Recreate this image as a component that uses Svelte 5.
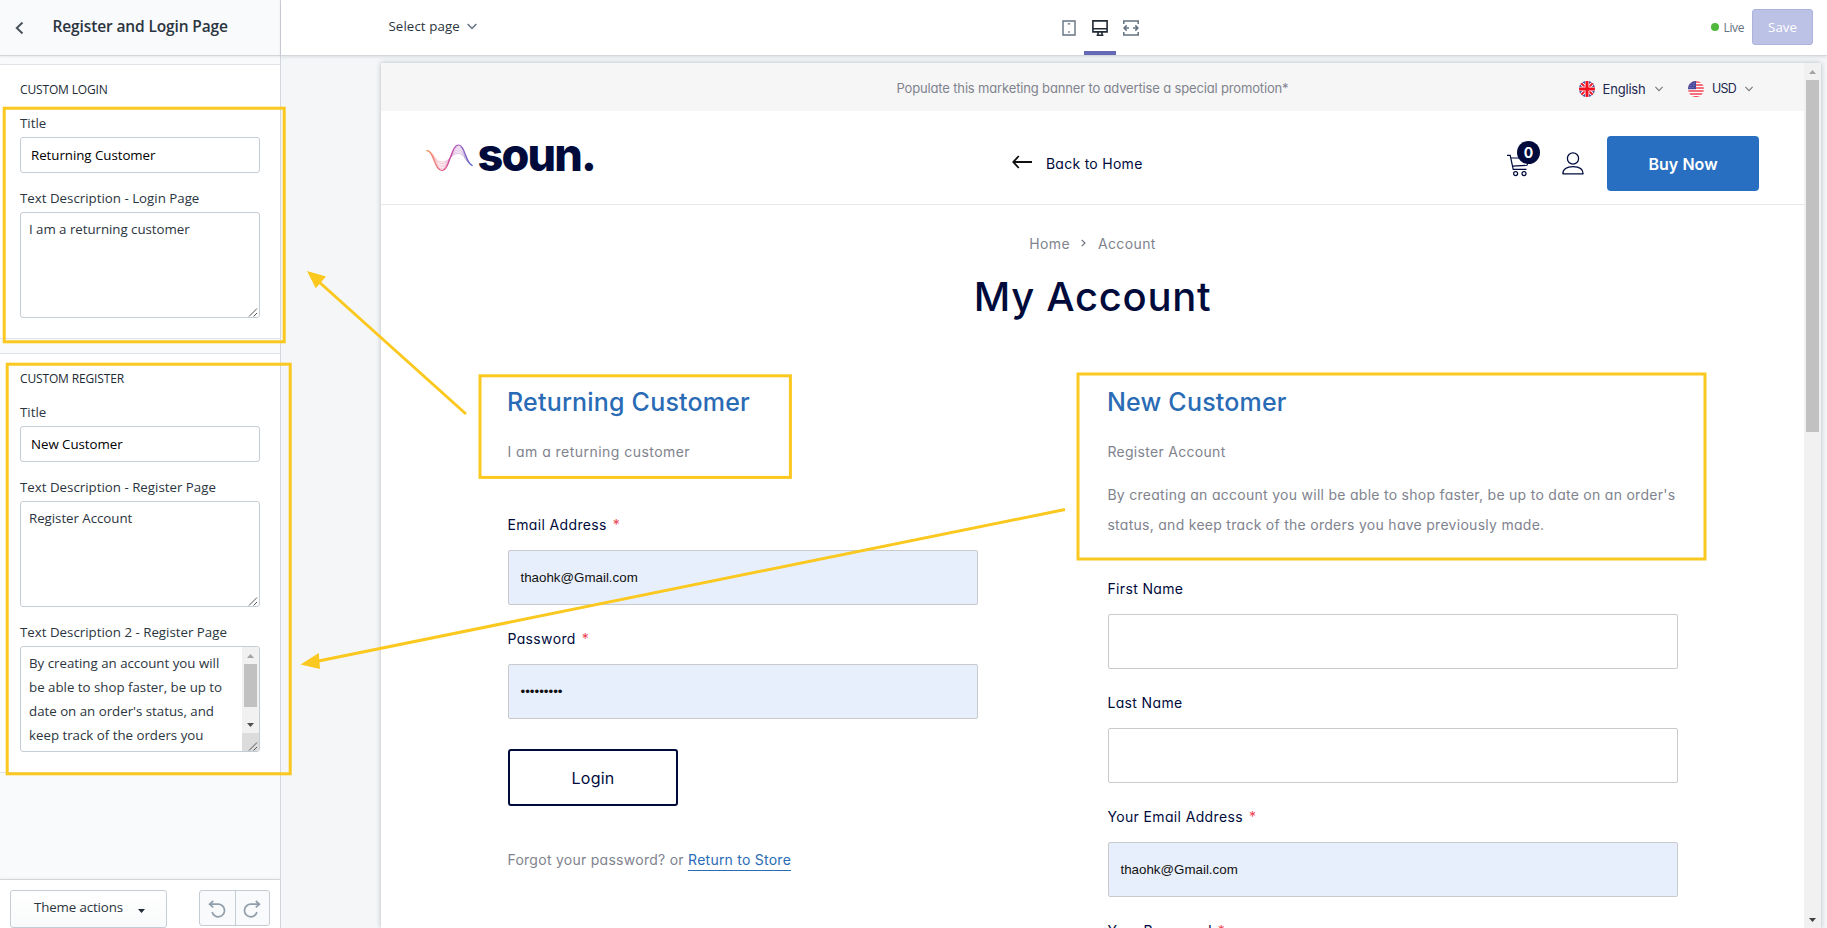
<script>
  const description2 =
    "By creating an account you will be able to shop faster, be up to date on an order's status, and keep track of the orders you";

  // Interpolated strands of the logo wave, outermost to innermost.
  const strands = [0, 1, 2, 3, 4, 5].map((i) => {
    const k = i * 1.7;
    return `M0.5 6.5C8 6.5 8 ${26.5 - k} 16 ${26.5 - k}C24 ${26.5 - k} 24.5 ${1 + k} 32.5 ${1 + k}C39 ${1 + k} 40 20 46.5 21.5`;
  });
</script>

{#snippet grip()}
  <svg class="grip" width="10" height="10" viewBox="0 0 10 10" stroke="#555" stroke-width="1" fill="none"><path d="M1 9.5L9 1.5M5.5 9.5L9 6" /></svg>
{/snippet}

{#snippet chevron()}
  <svg width="10" height="6" viewBox="0 0 10 6" fill="none" stroke="#777" stroke-width="1.1"><path d="M1.4 .8L5 4.6L8.6 .8" /></svg>
{/snippet}

<div class="app">
  <aside>
    <header class="side-head">
      <svg width="9" height="14" viewBox="0 0 9 14" fill="none" stroke="#4a545e" stroke-width="2"><path d="M7.5 1.5L1.8 7L7.5 12.5" /></svg>
      <h1>Register and Login Page</h1>
    </header>

    <section>
      <h2>CUSTOM LOGIN</h2>
      <div class="label">Title</div>
      <div class="input">Returning Customer</div>
      <div class="label">Text Description - Login Page</div>
      <div class="area">I am a returning customer{@render grip()}</div>
    </section>

    <section>
      <h2>CUSTOM REGISTER</h2>
      <div class="label">Title</div>
      <div class="input">New Customer</div>
      <div class="label">Text Description - Register Page</div>
      <div class="area">Register Account{@render grip()}</div>
      <div class="label">Text Description 2 - Register Page</div>
      <div class="area scrolls">
        <p>{description2}</p>
        <div class="bar">
          <svg width="17" height="17" viewBox="0 0 17 17"><path d="M5 11h7l-3.5-4z" fill="#a3a3a3" /></svg>
          <i></i>
          <svg width="17" height="17" viewBox="0 0 17 17"><path d="M5 7h7l-3.5 4z" fill="#505050" /></svg>
          <b>{@render grip()}</b>
        </div>
      </div>
    </section>

    <footer>
      <div class="btn">
        <span>Theme actions</span>
        <svg width="7" height="4" viewBox="0 0 7 4"><path d="M0 0h7L3.5 4z" fill="#212b36" /></svg>
      </div>
      <div class="history">
        <span><svg width="18" height="18" viewBox="0 0 18 18" fill="none" stroke="#919eab" stroke-width="1.7"><path d="M5.2 1L1.6 4.2L5.2 7.4M1.8 4.2H10A6.3 6.3 0 1 1 4.1 12" /></svg></span>
        <span><svg width="18" height="18" viewBox="0 0 18 18" fill="none" stroke="#919eab" stroke-width="1.7"><path d="M12.8 1L16.4 4.2L12.8 7.4M16.2 4.2H8A6.3 6.3 0 1 0 13.9 12" /></svg></span>
      </div>
    </footer>
  </aside>

  <main>
    <div class="topbar">
      <div class="select">
        <span>Select page</span>
        <svg width="10" height="7" viewBox="0 0 10 7" fill="none" stroke="#637381" stroke-width="1.5"><path d="M.7 1L5 5.4L9.3 1" /></svg>
      </div>
      <div class="tabs">
        <span>
          <svg width="14" height="16" viewBox="0 0 14 16" fill="none" stroke="#637381" stroke-width="1.4"><path d="M1 1h12v14H1zM5.7 3.9h2.6M6.2 12h1.6" /></svg>
        </span>
        <span class="on">
          <svg width="16" height="16" viewBox="0 0 16 16" fill="none" stroke="#212b36" stroke-width="1.6"><path d="M.9 .9h14.2v11H.9zM.9 8.8h14.2M6 12v3M10 12v3M4.6 15.2h6.8" /></svg>
        </span>
        <span>
          <svg width="16" height="16" viewBox="0 0 16 16" fill="none" stroke="#637381" stroke-width="1.5"><path d="M.8 4V.9h14.4V4M.8 12v3.1h14.4V12M1 8h5M10 8h5M3.7 5.4L1.1 8l2.6 2.6M12.3 5.4L14.9 8l-2.6 2.6" /></svg>
        </span>
      </div>
      <div class="status"><i></i><span>Live</span></div>
      <div class="save">Save</div>
    </div>

    <div class="stage">
      <div class="preview">
        <div class="shop">
          <div class="banner">
            <span></span>
            <p>Populate this marketing banner to advertise a special promotion*</p>
            <div class="locale">
              <svg width="16" height="16" viewBox="0 0 16 16">
                <clipPath id="uk"><circle cx="8" cy="8" r="8" /></clipPath>
                <g clip-path="url(#uk)">
                  <path fill="#1b2a83" d="M0 0h16v16H0z" />
                  <path d="M0 0L16 16M16 0L0 16" stroke="#fff" stroke-width="3.8" />
                  <path d="M0 0L16 16M16 0L0 16" stroke="#f01c2c" stroke-width="2" />
                  <path d="M8 0V16M0 8H16" stroke="#fff" stroke-width="4.4" />
                  <path d="M8 0V16M0 8H16" stroke="#f01020" stroke-width="3" />
                </g>
              </svg>
              <span class="en">English</span>
              {@render chevron()}
              <svg class="us" width="16" height="16" viewBox="0 0 16 16">
                <clipPath id="us"><circle cx="8" cy="8" r="8" /></clipPath>
                <g clip-path="url(#us)">
                  <path fill="#fff" d="M0 0h16v16H0z" />
                  <path d="M0 1H16M0 4H16M0 7H16M0 10H16M0 13H16M0 15.7H16" stroke="#ee4050" stroke-width="1.5" />
                  <path fill="#47479c" d="M0 0h8v8.2H0z" />
                  <path d="M2 2.4h5M2 4.4h5M1 6.4h6" stroke="#a9a9d8" stroke-width=".6" stroke-dasharray=".7 .8" />
                </g>
              </svg>
              <span class="usd">USD</span>
              {@render chevron()}
            </div>
          </div>

          <div class="head">
            <div class="logo">
              <svg width="47" height="28" viewBox="0 0 47 28" fill="none">
                <linearGradient id="wave" x1="0" x2="47" y1="0" y2="0" gradientUnits="userSpaceOnUse">
                  <stop offset="0" stop-color="#f79a5a" />
                  <stop offset=".35" stop-color="#e2467c" />
                  <stop offset=".65" stop-color="#a83cae" />
                  <stop offset="1" stop-color="#4a68c8" />
                </linearGradient>
                {#each strands as d, i}
                  <path {d} stroke="url(#wave)" stroke-width={i ? 0.6 : 1.1} opacity={i ? 0.55 : 0.9} />
                {/each}
              </svg>
              <span>soun.</span>
            </div>
            <div class="back">
              <svg width="20" height="14" viewBox="0 0 20 14" fill="none" stroke="#111" stroke-width="1.8"><path d="M6.8 1L1.3 7L6.8 13M1.3 7H20" /></svg>
              <span>Back to Home</span>
            </div>
            <div class="tools">
              <div class="cart">
                <svg width="24" height="23" viewBox="0 0 24 23" fill="none" stroke="#000b3c" stroke-width="1.2"><path d="M0 1.3H3.2L6.2 15.3H19.5M4 4H22L20 11.3L5.3 12.2" /><circle cx="8.6" cy="19.6" r="2" /><circle cx="17" cy="19.6" r="2" /></svg>
                <b>0</b>
              </div>
              <svg class="user" width="22" height="23" viewBox="0 0 22 23" fill="none" stroke="#000b3c" stroke-width="1.3"><circle cx="11" cy="6.5" r="5.6" /><path d="M.9 21.8C.9 17.2 4.5 14.6 11 14.6S21.1 17.2 21.1 21.8Z" stroke-linejoin="round" /></svg>
              <div class="buy">Buy Now</div>
            </div>
          </div>

          <nav>
            <span>Home</span>
            <svg width="5" height="8" viewBox="0 0 5 8" fill="none" stroke="#666a78" stroke-width="1.1"><path d="M.7 .8L4 4L.7 7.2" /></svg>
            <span>Account</span>
          </nav>
          <h1 class="title">My Account</h1>

          <div class="cols">
            <div class="login">
              <h3>Returning Customer</h3>
              <p class="intro">I am a returning customer</p>
              <div class="flabel">Email Address<em>*</em></div>
              <div class="field filled">thaohk@Gmail.com</div>
              <div class="flabel">Password<em>*</em></div>
              <div class="field filled">•••••••••</div>
              <div class="submit">Login</div>
              <p class="forgot">Forgot your password? or <a href="#store">Return to Store</a></p>
            </div>
            <div class="register">
              <h3>New Customer</h3>
              <p class="intro">Register Account</p>
              <p class="more">By creating an account you will be able to shop faster, be up to date on an order's<br />status, and keep track of the orders you have previously made.</p>
              <div class="flabel">First Name</div>
              <div class="field"></div>
              <div class="flabel">Last Name</div>
              <div class="field"></div>
              <div class="flabel">Your Email Address<em>*</em></div>
              <div class="field filled">thaohk@Gmail.com</div>
              <div class="flabel">Your Password<em>*</em></div>
            </div>
          </div>
        </div>
        <div class="track">
          <svg width="17" height="17" viewBox="0 0 17 17"><path d="M5 11h7l-3.5-4z" fill="#a3a3a3" /></svg>
          <i></i>
          <svg width="17" height="17" viewBox="0 0 17 17"><path d="M5 7h7l-3.5 4z" fill="#404040" /></svg>
        </div>
      </div>
    </div>
  </main>

  <svg class="notes" width="1827" height="928" viewBox="0 0 1827 928" fill="none" stroke="#fac81e" stroke-width="3">
    <rect x="4.2" y="108.2" width="280" height="233.6" />
    <rect x="7.2" y="364.2" width="283" height="409.6" />
    <rect x="480" y="375.8" width="310.4" height="101.6" />
    <rect x="1078" y="374" width="627" height="185" />
    <path d="M318 281L466 414M316 661.5L1065 509.5" />
    <path d="M307 271L326 276.5L315.7 288.3ZM300.5 664.5L318.8 653L320 669Z" fill="#fac81e" stroke="none" />
  </svg>
</div>

<style>
  :global(body) { overflow: hidden; background: #f4f6f8; }
  .app { position: relative; display: flex; width: 1827px; height: 928px; overflow: hidden; box-sizing: border-box; font-family: "Open Sans", "Noto Sans", sans-serif; font-size: 13.3px; color: #2b3540; }
  .app :global(*) { box-sizing: border-box; }
  h1, h2, h3, p { margin: 0; }
  svg { display: block; flex: none; }

  aside { display: flex; flex-direction: column; width: 281px; flex: none; background: #f9fafb; border-right: 1px solid #d3d8de; }
  .side-head { display: flex; align-items: center; height: 56px; flex: none; padding: 0 0 1px 15px; border-bottom: 1px solid #d3d7dc; gap: 28.5px; box-shadow: 0 1px 2px rgba(33, 43, 54, .08); }
  .side-head h1 { font-size: 15.5px; line-height: 24px; font-weight: 600; letter-spacing: -.13px; color: #2b3540; padding-bottom: 2px; }
  .side-head svg { margin-top: 1px; }
  section { background: #fff; border: solid #dfe3e8; border-width: 1px 0; padding: 15px 20px 20px; margin-top: 8px; flex: none; }
  section + section { margin-top: 14px; }
  section h2 { font-size: 12px; line-height: 20px; font-weight: 500; letter-spacing: -.15px; margin-bottom: 13px; color: #212b36; }
  .label { line-height: 20px; margin: 15px 0 4px; }
  h2 + .label { margin-top: 0; }
  .input, .area { border: 1px solid #c4cdd5; border-radius: 3px; background: #fff; }
  .input { height: 36px; padding: 0 10px; line-height: 34px; color: #000; letter-spacing: -.04px; }
  .area { position: relative; height: 106px; padding: 4px 8px; line-height: 24px; letter-spacing: -.04px; overflow: hidden; }
  .grip { position: absolute; right: 1px; bottom: 0; }
  .scrolls { display: flex; padding: 0 0 0 8px; }
  .scrolls p { flex: 1; height: 104px; padding: 4px 14px 0 0; letter-spacing: -.01px; }
  .bar { display: flex; flex-direction: column; width: 17px; background: #f1f1f1; flex: none; }
  .bar i { height: 43px; margin: 0 2px; background: #c1c1c1; }
  .bar svg + i + svg { margin-top: 9px; }
  .bar b { position: relative; flex: 1; background: #dcdcdc; }
  footer { display: flex; justify-content: space-between; height: 49px; margin-top: auto; padding: 10px 10px 0; background: #fff; border-top: 1px solid #d3d7dc; box-shadow: 0 -1px 2px rgba(33, 43, 54, .06); }
  .btn { display: flex; align-items: center; gap: 15px; width: 157px; height: 38px; padding-left: 23px; border: 1px solid #c4cdd5; border-radius: 3px; background: linear-gradient(#fff, #f9fafb); }
  .btn span { letter-spacing: -.12px; padding-bottom: 4px; }
  .btn svg { margin-top: 4px; }
  .history { display: flex; height: 36px; border: 1px solid #c4cdd5; border-radius: 3px; background: #f9fafb; }
  .history span { display: grid; place-items: center; width: 34.5px; padding-top: 1px; }
  .history span + span { border-left: 1px solid #c4cdd5; }

  main { display: flex; flex-direction: column; flex: 1; min-width: 0; }
  .topbar { position: relative; z-index: 1; display: flex; height: 56px; flex: none; background: #fff; border-bottom: 1px solid #d3d7dc; box-shadow: 0 1px 3px rgba(33, 43, 54, .12); }
  .select { display: flex; align-items: center; gap: 7px; width: 664px; padding: 0 0 4px 107.5px; letter-spacing: .08px; }
  .select svg { margin-top: 2px; }
  .select + .tabs { margin-left: 108px; }
  .tabs { display: flex; }
  .tabs span { display: grid; place-items: center; width: 31px; height: 55px; padding-top: 1px; }
  .tabs .on { width: 32px; border-bottom: 4px solid #6369b5; padding-top: 5px; }
  .tabs .on + span { width: 30px; }
  .status { display: flex; align-items: center; gap: 5px; margin-left: auto; font-size: 12px; letter-spacing: -.4px; color: #637381; }
  .status i { width: 8px; height: 8px; border-radius: 50%; background: #50b83c; margin-top: -1px; }
  .save { display: grid; place-items: center; width: 61px; height: 36px; margin: 9px 14px 0 8px; border: 1px solid #aeb3dd; border-radius: 3px; background: #bcc1e6; color: #fff; }

  .stage { flex: 1; min-height: 0; padding: 7px 6px 0 100px; background: #f4f6f8; }
  .preview { display: flex; height: 865px; background: #fff; box-shadow: 0 0 5px rgba(33, 43, 54, .28); }
  .shop { flex: 1; min-width: 0; overflow: hidden; font-family: Inter, "Open Sans", sans-serif; font-feature-settings: "cv11"; font-size: 14px; letter-spacing: .28px; color: #000b3c; }
  .banner { display: grid; grid-template-columns: 515.5px 391.5px 1fr; align-items: center; height: 48px; background: #f6f6f6; font-size: 13px; }
  .banner p { color: #80838e; letter-spacing: -.155px; white-space: nowrap; padding-top: 1px; }
  .locale { display: flex; align-items: center; justify-content: flex-end; padding: 3px 50px 0 0; letter-spacing: -.18px; color: #22284e; }
  .locale .en { width: 43px; margin: 0 8.5px 0 8px; }
  .locale .usd { width: 24px; margin: 0 8px; font-size: 12.4px; letter-spacing: -.7px; }
  .locale .us { margin-left: 24px; }
  .head { display: grid; grid-template-columns: 1fr auto 1fr; align-items: center; height: 94px; border-bottom: 1px solid #e8e8ea; padding: 0 45px 0 44.5px; }
  .logo { display: flex; align-items: center; gap: 5px; }
  .logo svg { margin-top: 1px; }
  .logo span { font-size: 45px; line-height: 50px; font-weight: 800; letter-spacing: -1.85px; color: #000b3c; padding-bottom: 4px; margin-top: -2px; }
  .back { display: flex; align-items: center; gap: 14px; padding-top: 11px; margin-right: 30px; }
  .back svg { margin-top: -2px; }
  .tools { display: flex; align-items: center; justify-content: flex-end; }
  .cart { position: relative; width: 24px; height: 23px; margin: 16px 30.5px 0 0; }
  .cart b { position: absolute; left: 10px; top: -13px; display: grid; place-items: center; width: 23px; height: 23px; border-radius: 50%; background: #000b3c; color: #fff; font-size: 14px; font-weight: 700; letter-spacing: 0; }
  .user { margin: 11px 23.5px 0 0; }
  .buy { display: grid; place-items: center; width: 152px; height: 55px; margin-top: 12px; border-radius: 4px; background: #286fc2; color: #fff; font-size: 16px; font-weight: 600; letter-spacing: .05px; padding-top: 1px; }
  nav { display: flex; justify-content: center; align-items: center; gap: 11.5px; height: 20px; margin-top: 28px; color: #80838e; letter-spacing: .38px; }
  .title { margin-top: 14px; text-align: center; font-size: 40px; line-height: 60px; font-weight: 500; letter-spacing: .7px; }
  .cols { display: flex; padding-left: 127px; margin-top: 55px; }
  .login { width: 470px; margin-right: 130px; }
  .register { width: 570px; }
  h3 { font-size: 25px; line-height: 40px; font-weight: 500; letter-spacing: .2px; color: #2a6bb5; margin-left: -1px; }
  .intro, .more, .forgot { line-height: 30px; color: #80838e; white-space: nowrap; margin-left: -.6px; }
  .intro { margin-top: 15px; letter-spacing: .3px; }
  .login .intro { margin-bottom: 43px; letter-spacing: .46px; }
  .more { margin: 13px 0 34px -.6px; }
  .flabel { line-height: 30px; margin: 19px 0 10px -.6px; letter-spacing: .36px; }
  .intro + .flabel, .more + .flabel { margin-top: 0; }
  em { font-style: normal; color: #ee4455; margin-left: 6px; }
  .field { height: 55px; border: 1px solid #c8cacd; border-radius: 2px; padding: 0 11.5px; font: 13.333px/54px "Liberation Sans", Arial, sans-serif; letter-spacing: 0; color: #111; }
  .filled { background: #e8effc; }
  .submit { display: grid; place-items: center; width: 170px; height: 57px; margin-top: 30px; border: 2px solid #000b3c; border-radius: 3px; font-size: 16px; letter-spacing: .25px; }
  .forgot { margin-top: 39px; letter-spacing: .27px; }
  .forgot a { color: #2a6bb5; text-decoration: none; border-bottom: 1px solid #2a6bb5; letter-spacing: .24px; padding-bottom: 2px; }
  .track { display: flex; flex-direction: column; width: 17px; flex: none; background: #f1f1f1; }
  .track i { height: 352px; margin: 0 2px; background: #c1c1c1; }
  .track svg:last-child { margin-top: auto; }
  .notes { position: absolute; left: 0; top: 0; z-index: 3; pointer-events: none; }
</style>
